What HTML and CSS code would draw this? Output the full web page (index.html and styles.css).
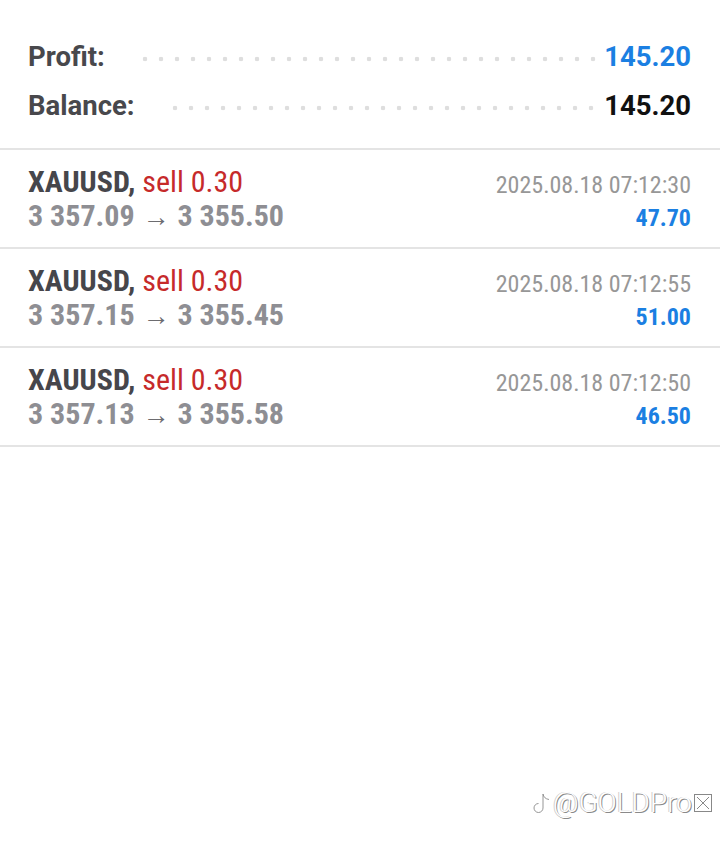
FILE: index.html
```html
<!DOCTYPE html>
<html>
<head>
	<title>History</title>
	<link rel="stylesheet" href="styles.css">
</head>
<body>
	<div class="summary">
		<div class="sumRow">
			<span class="label">Profit:</span>
			<span class="dots"></span>
			<span class="value blue">145.20</span>
		</div>
		<div class="sumRow">
			<span class="label">Balance:</span>
			<span class="dots"></span>
			<span class="value">145.20</span>
		</div>
	</div>

	<ul class="trades">
		<li>
			<div class="left">
				<div class="title">XAUUSD, <span class="sell">sell 0.30</span></div>
				<div class="prices">3 357.09 <span class="arrow">&rarr;</span> 3 355.50</div>
			</div>
			<div class="right">
				<div class="date">2025.08.18 07:12:30</div>
				<div class="pl">47.70</div>
			</div>
		</li>
		<li>
			<div class="left">
				<div class="title">XAUUSD, <span class="sell">sell 0.30</span></div>
				<div class="prices">3 357.15 <span class="arrow">&rarr;</span> 3 355.45</div>
			</div>
			<div class="right">
				<div class="date">2025.08.18 07:12:55</div>
				<div class="pl">51.00</div>
			</div>
		</li>
		<li>
			<div class="left">
				<div class="title">XAUUSD, <span class="sell">sell 0.30</span></div>
				<div class="prices">3 357.13 <span class="arrow">&rarr;</span> 3 355.58</div>
			</div>
			<div class="right">
				<div class="date">2025.08.18 07:12:50</div>
				<div class="pl">46.50</div>
			</div>
		</li>
	</ul>

	<!-- watermark -->
	<div class="mark">
		<svg width="22" height="26" viewBox="0 0 22 26">
			<path d="M12 3v14a4.5 4.5 0 1 1-4.5-4.5M12 3c0.5 3 2.5 5 6 5.5" fill="none" stroke="#fff" stroke-width="2.4"/>
			<path d="M13 4v14a4.5 4.5 0 1 1-4.5-4.5M13 4c0.5 3 2.5 5 6 5.5" fill="none" stroke="#8a8a8a" stroke-width="0.9"/>
		</svg>
		<span>@GOLDPro</span>
		<svg width="20" height="20" viewBox="0 0 20 20">
			<rect x="1.5" y="1.5" width="17" height="17" fill="none" stroke="#888" stroke-width="1"/>
			<path d="M4 4l12 12M16 4L4 16" stroke="#888" stroke-width="1"/>
		</svg>
	</div>
</body>
</html>
```

FILE: styles.css
```css
html *{
	margin: 0;
	padding: 0;
}
body{
	font-family: Roboto, "Noto Sans", sans-serif;
	font-stretch: 85%;
	background: #fff;
	width: 720px;
	height: 847px;
	position: relative;
	overflow: hidden;
}
.summary{
	padding: 32px 29px 18px 28px;
	border-bottom: 2px solid #e4e4e4;
}
.sumRow{
	display: flex;
	align-items: center;
	height: 49px;
}
.label{
	font-size: 27.5px;
	font-weight: bold;
	font-stretch: 100%;
	color: #48484c;
}
.dots{
	flex: 1;
	height: 8px;
	margin: 4px 8px 0 32px;
	background: radial-gradient(circle, #dedede 2px, transparent 2.6px) left center repeat-x;
	background-size: 16px 8px;
}
.value{
	font-size: 27.5px;
	font-weight: bold;
	font-stretch: 100%;
	color: #111;
}
.blue{
	color: #1b7fe2;
}
.trades li{
	list-style: none;
	display: flex;
	justify-content: space-between;
	padding: 15px 29px 14px 28px;
	border-bottom: 2px solid #e4e4e4;
}
.title, .prices{
	height: 34px;
	line-height: 34px;
	font-size: 30px;
	font-weight: bold;
	color: #46464b;
}
.sell{
	font-weight: normal;
	color: #c62a2a;
}
.prices{
	color: #8e8e93;
}
.arrow{
	font-weight: normal;
	font-size: 27px;
	margin: 0 1px;
	color: #6c6c70;
}
.right{
	text-align: right;
}
.date{
	height: 34px;
	line-height: 40px;
	font-size: 24px;
	color: #979797;
}
.pl{
	height: 34px;
	line-height: 38px;
	font-size: 24px;
	font-weight: bold;
	color: #1b7fe2;
}
.mark{
	position: absolute;
	right: 7px;
	top: 786px;
	display: flex;
	align-items: center;
	gap: 1px;
	font-size: 28px;
	font-weight: 300;
	font-stretch: 100%;
	color: #fff;
	text-shadow: 1px 1px 0 #8a8a8a, -1px 0 0 #cfcfcf;
}
```
